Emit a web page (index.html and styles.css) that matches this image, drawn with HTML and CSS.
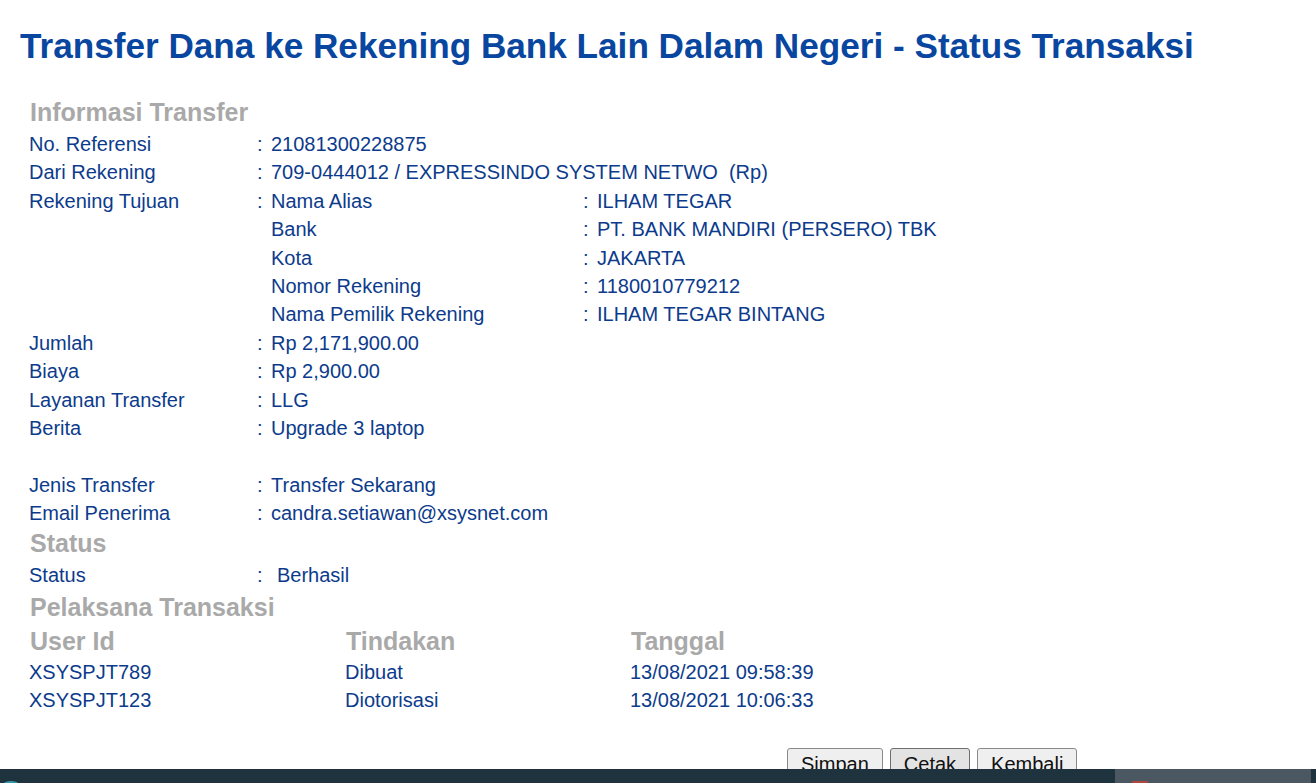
FILE: index.html
```html
<!DOCTYPE html>
<html lang="id">
<head>
<meta charset="utf-8">
<title>Status Transaksi</title>
<link rel="stylesheet" href="styles.css">
</head>
<body>
<div class="page">
  <h1 class="title">Transfer Dana ke Rekening Bank Lain Dalam Negeri - Status Transaksi</h1>

  <section class="content">
    <h2 class="section-head">Informasi Transfer</h2>
    <div class="info">
      <div class="lbl">No. Referensi</div><div class="col">:</div><div class="val">21081300228875</div>
      <div class="lbl">Dari Rekening</div><div class="col">:</div><div class="val">709-0444012 / EXPRESSINDO SYSTEM NETWO&nbsp; (Rp)</div>
      <div class="lbl">Rekening Tujuan</div><div class="col">:</div>
      <div class="val">
        <div class="sub">
          <div class="sublbl">Nama Alias</div><div class="col">:</div><div>ILHAM TEGAR</div>
          <div class="sublbl">Bank</div><div class="col">:</div><div>PT. BANK MANDIRI (PERSERO) TBK</div>
          <div class="sublbl">Kota</div><div class="col">:</div><div>JAKARTA</div>
          <div class="sublbl">Nomor Rekening</div><div class="col">:</div><div>1180010779212</div>
          <div class="sublbl">Nama Pemilik Rekening</div><div class="col">:</div><div>ILHAM TEGAR BINTANG</div>
        </div>
      </div>
      <div class="lbl">Jumlah</div><div class="col">:</div><div class="val">Rp 2,171,900.00</div>
      <div class="lbl">Biaya</div><div class="col">:</div><div class="val">Rp 2,900.00</div>
      <div class="lbl">Layanan Transfer</div><div class="col">:</div><div class="val">LLG</div>
      <div class="lbl">Berita</div><div class="col">:</div><div class="val">Upgrade 3 laptop</div>
      <div class="blank"></div>
      <div class="lbl">Jenis Transfer</div><div class="col">:</div><div class="val">Transfer Sekarang</div>
      <div class="lbl">Email Penerima</div><div class="col">:</div><div class="val">candra.setiawan@xsysnet.com</div>
    </div>

    <h2 class="section-head">Status</h2>
    <div class="info">
      <div class="lbl">Status</div><div class="col">:</div><div class="val status-val">Berhasil</div>
    </div>

    <h2 class="section-head section-head-spaced">Pelaksana Transaksi</h2>
    <div class="actors">
      <div class="th">User Id</div><div class="th">Tindakan</div><div class="th">Tanggal</div>
      <div class="td">XSYSPJT789</div><div class="td">Dibuat</div><div class="td">13/08/2021 09:58:39</div>
      <div class="td">XSYSPJT123</div><div class="td">Diotorisasi</div><div class="td">13/08/2021 10:06:33</div>
    </div>

    <div class="actions">
      <button class="btn" type="button">Simpan</button>
      <button class="btn btn-active" type="button">Cetak</button>
      <button class="btn" type="button">Kembali</button>
    </div>
  </section>
</div>

<div class="taskbar">
  <span class="tb-glow"></span>
  <span class="tb-app"><span class="tb-red"></span></span>
  <span class="tb-edge"></span>
</div>
</body>
</html>
```

FILE: styles.css
```css
html, body {
  margin: 0;
  padding: 0;
  background: #ffffff;
}

body {
  font-family: "Liberation Sans", Arial, sans-serif;
  color: #0c3b8c;
  overflow: hidden;
  height: 783px;
}

.page {
  padding-top: 26px;
}

.title {
  margin: 0 0 0 20px;
  font-size: 35.15px;
  line-height: 40px;
  font-weight: bold;
  color: #0846a0;
  white-space: nowrap;
}

.content {
  padding-left: 29px;
  margin-top: 31px;
}

.section-head {
  margin: 0 0 3px 1px;
  font-size: 25px;
  line-height: 30px;
  font-weight: bold;
  color: #a9a9a9;
}

.section-head-spaced {
  margin-top: 3px;
}

.info {
  display: grid;
  grid-template-columns: 228px 14px auto;
  font-size: 20px;
  line-height: 28.4px;
  margin-bottom: 0;
}

.blank {
  grid-column: 1 / 4;
  height: 28.4px;
}

.col {
  white-space: pre;
}

.val {
  white-space: nowrap;
}

.status-val {
  padding-left: 6px;
}

.sub {
  display: grid;
  grid-template-columns: 312px 14px auto;
}

.actors {
  display: grid;
  grid-template-columns: 316px 285px auto;
  margin-top: 3px;
}

.th {
  font-size: 25px;
  line-height: 33px;
  font-weight: bold;
  color: #a9a9a9;
  padding-left: 1px;
}

.td {
  font-size: 20px;
  line-height: 28.4px;
}

.actions {
  display: flex;
  gap: 7px;
  padding-left: 758px;
  margin-top: 33px;
}

.btn {
  font-family: "Liberation Sans", Arial, sans-serif;
  font-size: 20px;
  line-height: 24px;
  padding: 3px 13px 2px;
  color: #111111;
  background: #efefef;
  border: 1px solid #8a8a8a;
  border-radius: 3px;
}

.btn-active {
  background: #e3e3e3;
  border-color: #6f6f6f;
}

.taskbar {
  position: fixed;
  left: 0;
  right: 0;
  bottom: 0;
  height: 14px;
  background: #1f333e;
  display: flex;
}

.tb-glow {
  position: absolute;
  left: 4px;
  bottom: -3px;
  width: 14px;
  height: 5px;
  border-radius: 50%;
  background: #3fc6d6;
  opacity: 0.7;
}

.tb-app {
  position: absolute;
  left: 1115px;
  width: 196px;
  top: 0;
  bottom: 0;
  background: #4b5862;
}

.tb-red {
  position: absolute;
  left: 17px;
  bottom: 0;
  width: 16px;
  height: 2px;
  background: #c8423a;
  opacity: 0.8;
}

.tb-edge {
  position: absolute;
  right: 0;
  width: 5px;
  top: 0;
  bottom: 0;
  background: #1f333e;
}
```
